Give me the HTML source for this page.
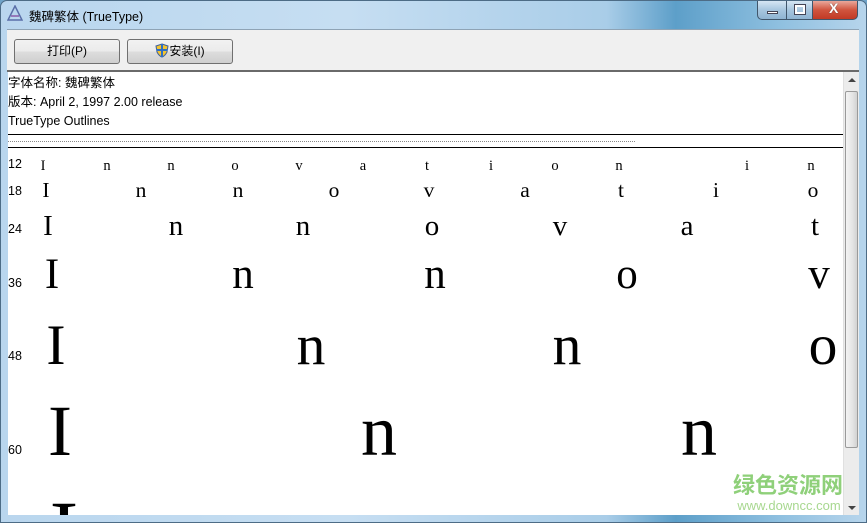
<!DOCTYPE html>
<html><head><meta charset="utf-8"><style>
*{margin:0;padding:0;box-sizing:border-box}
html,body{width:867px;height:523px;overflow:hidden}
body{position:relative;background:#6fa3c8;font-family:"Liberation Sans","Noto Sans CJK SC",sans-serif}
.frame{position:absolute;left:0;top:0;width:867px;height:523px;border-radius:7px 7px 0 0;background:linear-gradient(90deg,#b9d6ee 0%,#c6def2 40%,#a9cde8 70%,#5d9fc9 78%,#8fc0e0 90%,#b7d5ec 100%);border:1px solid #4d6c86}
.title{position:absolute;left:29px;top:6px;font-size:12.5px;color:#000}
.tb{position:absolute;left:7px;top:29px;width:852px;height:43px;background:#f0f0f0;border-top:1px solid #8ea3b5;border-bottom:2px solid #6a6a6a}
.btn{position:absolute;top:39px;height:25px;border:1px solid #707070;border-radius:3px;background:linear-gradient(#f2f2f2,#ebebeb 50%,#dddddd 51%,#cfcfcf);font-size:12px;text-align:center;line-height:23px}
.client{position:absolute;left:8px;top:72px;width:835px;height:443px;background:#fff;overflow:hidden}
.info{position:absolute;left:0;font-size:12.5px;line-height:19px;height:19px;color:#000;white-space:nowrap}
.sb{position:absolute;left:843px;top:72px;width:16px;height:443px;background:#ececec;border-left:1px solid #e0e0e0}
.cap{position:absolute;top:1px;height:19px;border:1px solid #40566b;border-top:none}
</style></head><body>
<div class="frame"></div>
<svg style="position:absolute;left:7px;top:5px" width="16" height="16" viewBox="0 0 16 16"><path d="M8 1 L15 15 L1 15 Z" fill="none" stroke="#5a6fa8" stroke-width="1.5"/><path d="M4 11 L12 11" stroke="#8a5aa8" stroke-width="1.5"/></svg>
<div class="title">魏碑繁体 (TrueType)</div>
<div class="cap" style="left:757px;width:30px;border-radius:0 0 0 5px;background:linear-gradient(#d6e6f3,#a7c6df 50%,#8fb4d2)"><div style="position:absolute;left:9px;top:10px;width:11px;height:3px;background:#fff;border:1px solid #445"></div></div>
<div class="cap" style="left:786px;width:27px;background:linear-gradient(#d6e6f3,#a7c6df 50%,#8fb4d2)"><div style="position:absolute;left:8px;top:4px;width:10px;height:9px;border:2px solid #fff;outline:1px solid #445"></div></div>
<div class="cap" style="left:812px;width:46px;border-radius:0 0 5px 0;background:linear-gradient(#e9a89b,#d0543e 50%,#c23a25)"><div style="position:absolute;left:16px;top:-1px;color:#fff;font-weight:bold;font-size:14px;text-shadow:0 0 1px #333">X</div></div>
<div class="tb"></div>
<div class="btn" style="left:14px;width:106px">打印(P)</div>
<div class="btn" style="left:127px;width:106px"><svg width="14" height="15" viewBox="0 0 14 15" style="vertical-align:-3px"><path d="M7 1 L13 3 L12 9 Q10 13 7 14 Q4 13 2 9 L1 3 Z" fill="#f4c430" stroke="#3a5fa0"/><path d="M7 1 L7 14 M1.5 7 L12.5 7" stroke="#2f6fc4" stroke-width="2"/></svg>安装(I)</div>
<div class="client">
<div class="info" style="top:2px">字体名称: 魏碑繁体</div>
<div class="info" style="top:21px">版本: April 2, 1997 2.00 release</div>
<div class="info" style="top:40px">TrueType Outlines</div>
<div style="position:absolute;left:0;top:62px;width:835px;height:1px;background:#000"></div>
<div style="position:absolute;left:0;top:69px;width:627px;border-top:1px dotted #888"></div>
<div style="position:absolute;left:0;top:75px;width:835px;height:1px;background:#000"></div>
<svg style="position:absolute;left:-8px;top:-72px" width="867" height="515">
<g font-family="Liberation Sans, sans-serif" font-size="12.5" fill="#000">
<text x="8" y="168">12</text><text x="8" y="195">18</text><text x="8" y="233">24</text><text x="8" y="287">36</text><text x="8" y="360">48</text><text x="8" y="454">60</text>
</g>
<g font-family="Liberation Serif, serif" fill="#000" text-anchor="middle">
<g font-size="14.5"><text x="43" y="170">I</text><text x="107" y="170">n</text><text x="171" y="170">n</text><text x="235" y="170">o</text><text x="299" y="170">v</text><text x="363" y="170">a</text><text x="427" y="170">t</text><text x="491" y="170">i</text><text x="555" y="170">o</text><text x="619" y="170">n</text><text x="747" y="170">i</text><text x="811" y="170">n</text></g>
<g font-size="21.5"><text x="46" y="197">I</text><text x="141" y="197">n</text><text x="238" y="197">n</text><text x="334" y="197">o</text><text x="429" y="197">v</text><text x="525" y="197">a</text><text x="621" y="197">t</text><text x="716" y="197">i</text><text x="813" y="197">o</text></g>
<g font-size="29"><text x="48" y="235">I</text><text x="176" y="235">n</text><text x="303" y="235">n</text><text x="432" y="235">o</text><text x="560" y="235">v</text><text x="687" y="235">a</text><text x="815" y="235">t</text></g>
<g font-size="43"><text x="52" y="288">I</text><text x="243" y="288">n</text><text x="435" y="288">n</text><text x="627" y="288">o</text><text x="819" y="288">v</text></g>
<g font-size="57.5"><text x="56" y="364">I</text><text x="311" y="364">n</text><text x="567" y="364">n</text><text x="823" y="364">o</text></g>
<g font-size="72"><text x="60" y="455">I</text><text x="379" y="455">n</text><text x="699" y="455">n</text></g>
<g font-size="86"><text x="64" y="560">I</text></g>
</g>
<text x="788" y="493" text-anchor="middle" font-family="Noto Sans CJK SC, sans-serif" font-weight="bold" font-size="22" fill="#8fd07a">绿色资源网</text>
<text x="789" y="510" text-anchor="middle" font-family="Liberation Sans, sans-serif" font-size="13" fill="#a8d890">www.downcc.com</text>
</svg>
</div>
<div class="sb">
<div style="position:absolute;left:4px;top:6px;border:4px solid transparent;border-bottom:4px solid #444;border-top:none;width:0"></div>
<div style="position:absolute;left:1px;top:19px;width:13px;height:357px;border:1px solid #9a9a9a;border-radius:2px;background:linear-gradient(90deg,#f4f4f4,#e4e4e4 60%,#d2d2d2)"></div>
<div style="position:absolute;left:4px;top:434px;border:4px solid transparent;border-top:4px solid #444;border-bottom:none;width:0"></div>
</div>
</body></html>
